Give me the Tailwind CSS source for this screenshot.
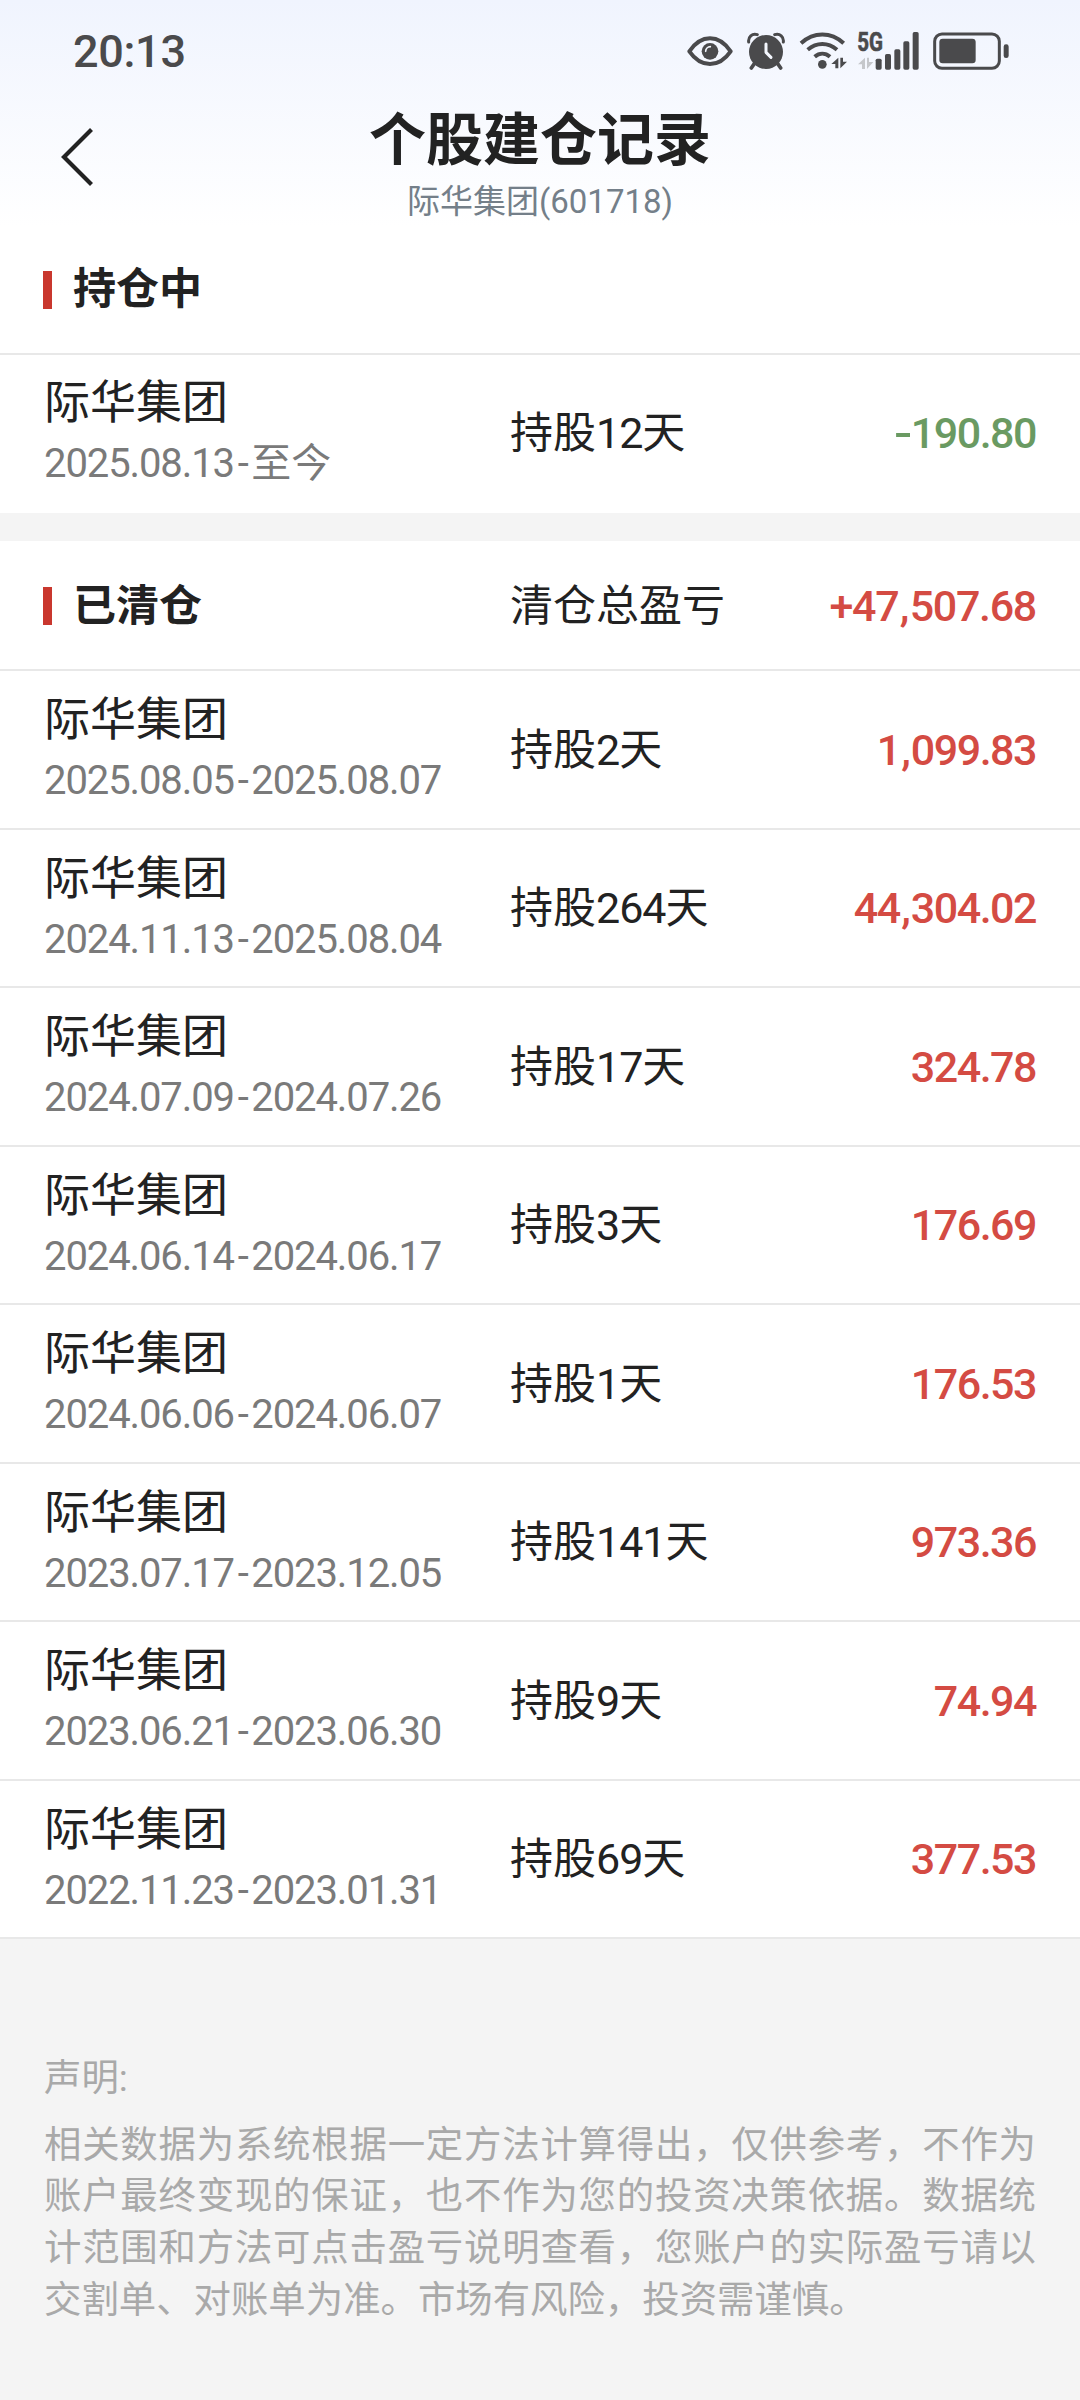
<!DOCTYPE html>
<html lang="zh-CN">
<head>
  <meta charset="UTF-8" />
  <meta name="viewport" content="width=device-width, initial-scale=1.0"/>
  <title>个股建仓记录</title>
  <script src="https://cdn.jsdelivr.net/npm/@tailwindcss/browser@4"></script>
</head>
<body class="min-h-screen bg-[#f4f4f4] font-['Roboto','Noto_Sans_CJK_SC',sans-serif] text-[#222222]">
  <header class="h-[227px] bg-linear-to-b from-[#f0f4fe] to-white">
    <!-- Status bar -->
    <div class="h-[102px] pl-[73px] pr-[71px] flex items-center justify-between text-[#4a4a4c]">
      <span class="text-[45px] leading-none font-medium tracking-[-0.3px]">20:13</span>
      <div class="flex items-center">
        <svg class="w-[46px] h-[38px]" viewBox="79 68 138 114" fill="none">
          <path d="M86 126C104 100 125 87 148 87s44 13 62 39c-18 26-39 38-62 38s-44-12-62-38z" stroke="currentColor" stroke-width="12" stroke-linejoin="round"/>
          <circle cx="148" cy="126" r="25" fill="currentColor"/>
          <path d="M135 126a14 14 0 0 1 14-14" stroke="#f4f7fe" stroke-width="5" stroke-linecap="round"/>
        </svg>
        <svg class="ml-[14px] w-[38px] h-[38px]" viewBox="260 68 114 114" fill="none">
          <circle cx="317" cy="128" r="51" fill="currentColor"/>
          <path d="M265 98c-2-15 10-27 26-22M369 98c2-15-10-27-26-22" stroke="currentColor" stroke-width="9" stroke-linecap="round"/>
          <path d="M282 163l-9 13M352 163l9 13" stroke="currentColor" stroke-width="11" stroke-linecap="round"/>
          <path d="M317 104v25l15 15" stroke="#f4f7fe" stroke-width="9" stroke-linecap="round" stroke-linejoin="round"/>
        </svg>
        <svg class="ml-[14px] w-[49px] h-[38px]" viewBox="416 64 147 114" fill="none">
          <path d="M422 98c38-35 90-35 128 0M442 117c27-23 61-23 88 0M463 138c14-12 32-12 46 0" stroke="currentColor" stroke-width="12"/>
          <circle cx="486" cy="161" r="13" fill="currentColor"/>
          <path d="M534 141v32h-9v-13h-12zM540 173v-32h8v12h12z" fill="currentColor"/>
        </svg>
        <svg class="ml-[9px] w-[63px] h-[38px] overflow-visible" viewBox="590 65 189 114">
          <text x="591" y="121" font-family="Roboto" font-weight="700" font-size="76" textLength="77" lengthAdjust="spacingAndGlyphs" fill="currentColor" stroke="currentColor" stroke-width="2">5G</text>
          <path d="M614 142v34h-9v-14h-12zM620 176v-34h6v13h13z" fill="#c5c7cb"/>
          <g fill="currentColor">
            <rect x="646" y="145" width="18" height="33" rx="5"/>
            <rect x="674" y="131" width="18" height="47" rx="5"/>
            <rect x="702" y="117" width="18" height="61" rx="5"/>
            <rect x="729" y="93" width="18" height="85" rx="5"/>
            <rect x="757" y="65" width="18" height="113" rx="5"/>
          </g>
        </svg>
        <svg class="ml-[13px] w-[76px] h-[38px]" viewBox="820 64 228 114">
          <rect x="825" y="70" width="194" height="103" rx="22" fill="none" stroke="currentColor" stroke-width="9"/>
          <rect x="839" y="84" width="109" height="74" rx="10" fill="currentColor"/>
          <rect x="1032" y="101" width="15" height="41" rx="7" fill="currentColor"/>
        </svg>
      </div>
    </div>

    <!-- Title -->
    <div class="flex px-[60px]">
      <svg class="mt-[25px] w-[34px] h-[60px]" viewBox="0 0 34 60" fill="none">
        <path d="M31.500 2.500L4 30l27.500 27.500" stroke="#222222" stroke-width="4.200"/>
      </svg>
      <div class="flex-1 pr-[34px] flex flex-col items-center">
        <h1 class="mt-[5px] text-[57px] leading-[68px] font-bold">个股建仓记录</h1>
        <p class="mt-[6px] text-[33px] leading-[42px] text-[#747f89]">际华集团(601718)</p>
      </div>
    </div>
  </header>

  <!-- Holding -->
  <section class="bg-white">
    <div class="h-[128px] px-11 flex items-center border-b-2 border-[#e8e8e8]">
      <i class="-ml-px w-[9px] h-[38px] bg-[#c9372e]"></i>
      <h2 class="ml-[21px] -mt-[2px] text-[43px] leading-none font-bold">持仓中</h2>
    </div>
    <div id="holding"></div>
  </section>

  <!-- Cleared -->
  <section class="mt-[28px] bg-white">
    <div class="h-[130px] px-11 pt-[2px] flex items-center border-b-2 border-[#e8e8e8]">
      <i class="-ml-px w-[9px] h-[38px] bg-[#c9372e]"></i>
      <h2 class="ml-[21px] w-[437px] text-[43px] leading-none font-bold">已清仓</h2>
      <span class="text-[43px] leading-none">清仓总盈亏</span>
      <span class="ml-auto text-[43px] leading-none font-medium tracking-[-1.3px] text-[#d44b43]">+47<span class="mx-[1.5px]">,</span>507.68</span>
    </div>
    <div id="cleared"></div>
  </section>

  <footer class="px-11 pt-[114px] text-[37.4px] leading-[51.7px] text-[#a9a9a9]">
    <p>声明:</p>
    <p class="mt-[15px] text-justify">相关数据为系统根据一定方法计算得出，仅供参考，不作为账户最终变现的保证，也不作为您的投资决策依据。数据统计范围和方法可点击盈亏说明查看，您账户的实际盈亏请以交割单、对账单为准。市场有风险，投资需谨慎。</p>
  </footer>

  <script>
    const holding = [['2025.08.13', '至今', 12, '-190.80']];
    const cleared = [
      ['2025.08.05', '2025.08.07', 2, '1,099.83'],
      ['2024.11.13', '2025.08.04', 264, '44,304.02'],
      ['2024.07.09', '2024.07.26', 17, '324.78'],
      ['2024.06.14', '2024.06.17', 3, '176.69'],
      ['2024.06.06', '2024.06.07', 1, '176.53'],
      ['2023.07.17', '2023.12.05', 141, '973.36'],
      ['2023.06.21', '2023.06.30', 9, '74.94'],
      ['2022.11.23', '2023.01.31', 69, '377.53'],
    ];

    // the comma and the minus sign get a bit more room than the digits
    const money = s => s
      .replace(/^-/, '<span class="inline-block origin-left scale-x-125 mr-[4px]">-</span>')
      .replace(',', '<span class="mx-[1.5px]">,</span>');

    const row = ([from, to, days, profit], box) => `
      <div class="${box} px-11 flex items-center">
        <div class="w-[466px]">
          <div class="text-[46px] leading-[60px]">际华集团</div>
          <div class="mt-[2px] text-[40px] leading-[60px] tracking-[-1.1px] text-[#7a7a7a]">${from}<span class="mx-[3.7px]">-</span><span class="${to === '至今' ? 'tracking-normal' : ''}">${to}</span></div>
        </div>
        <div class="text-[43px] leading-none">持股<span class="tracking-[-1px]">${days}</span>天</div>
        <div class="ml-auto text-[43px] leading-none font-medium tracking-[-1.5px] ${profit.startsWith('-') ? 'text-[#6a9a62]' : 'text-[#d44b43]'}">${money(profit)}</div>
      </div>`;

    document.getElementById('holding').innerHTML = holding.map(r => row(r, 'h-[158px] pb-[2px]')).join('');
    document.getElementById('cleared').innerHTML = cleared.map(r => row(r, 'h-[158.5px] pt-[2px] border-b-2 border-[#e8e8e8]')).join('');
  </script>
</body>
</html>
